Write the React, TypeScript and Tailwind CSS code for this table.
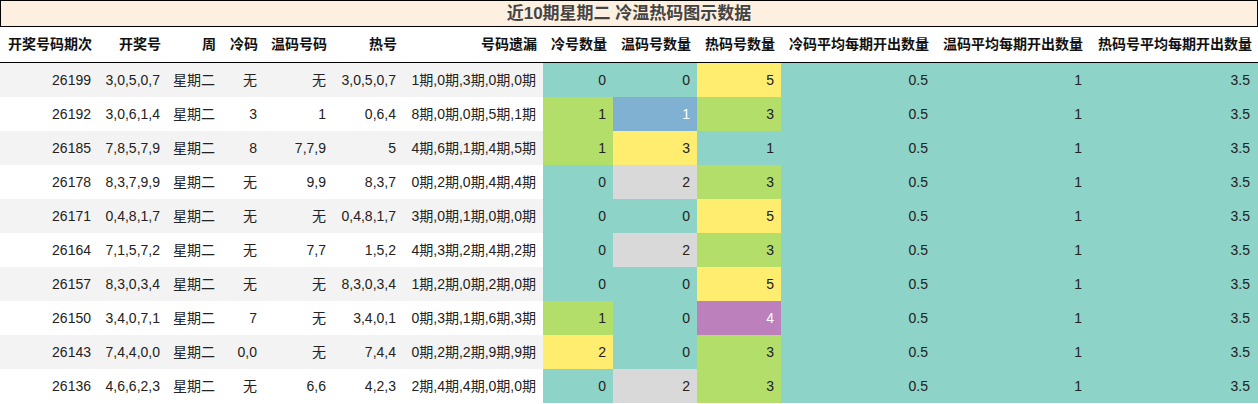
import React from "react";

const widths = [98, 69, 55, 42, 69, 70, 140, 70, 84, 84, 154, 154, 169];
const headers = [
  "开奖号码期次",
  "开奖号",
  "周",
  "冷码",
  "温码号码",
  "热号",
  "号码遗漏",
  "冷号数量",
  "温码号数量",
  "热码号数量",
  "冷码平均每期开出数量",
  "温码平均每期开出数量",
  "热码号平均每期开出数量",
];

type C = "t" | "g" | "y" | "b" | "s" | "p";
const rows: { d: string[]; n: [string, C][] }[] = [
  { d: ["26199", "3,0,5,0,7", "星期二", "无", "无", "3,0,5,0,7", "1期,0期,3期,0期,0期"], n: [["0", "t"], ["0", "t"], ["5", "y"]] },
  { d: ["26192", "3,0,6,1,4", "星期二", "3", "1", "0,6,4", "8期,0期,0期,5期,1期"], n: [["1", "g"], ["1", "b"], ["3", "g"]] },
  { d: ["26185", "7,8,5,7,9", "星期二", "8", "7,7,9", "5", "4期,6期,1期,4期,5期"], n: [["1", "g"], ["3", "y"], ["1", "t"]] },
  { d: ["26178", "8,3,7,9,9", "星期二", "无", "9,9", "8,3,7", "0期,2期,0期,4期,4期"], n: [["0", "t"], ["2", "s"], ["3", "g"]] },
  { d: ["26171", "0,4,8,1,7", "星期二", "无", "无", "0,4,8,1,7", "3期,0期,1期,0期,0期"], n: [["0", "t"], ["0", "t"], ["5", "y"]] },
  { d: ["26164", "7,1,5,7,2", "星期二", "无", "7,7", "1,5,2", "4期,3期,2期,4期,2期"], n: [["0", "t"], ["2", "s"], ["3", "g"]] },
  { d: ["26157", "8,3,0,3,4", "星期二", "无", "无", "8,3,0,3,4", "1期,2期,0期,2期,0期"], n: [["0", "t"], ["0", "t"], ["5", "y"]] },
  { d: ["26150", "3,4,0,7,1", "星期二", "7", "无", "3,4,0,1", "0期,3期,1期,6期,3期"], n: [["1", "g"], ["0", "t"], ["4", "p"]] },
  { d: ["26143", "7,4,4,0,0", "星期二", "0,0", "无", "7,4,4", "0期,2期,2期,9期,9期"], n: [["2", "y"], ["0", "t"], ["3", "g"]] },
  { d: ["26136", "4,6,6,2,3", "星期二", "无", "6,6", "4,2,3", "2期,4期,4期,0期,0期"], n: [["0", "t"], ["2", "s"], ["3", "g"]] },
];

const colorCls: Record<C, string> = {
  t: "bg-[#8dd3c7] text-[#222]",
  g: "bg-[#b3de69] text-[#222]",
  y: "bg-[#ffed6f] text-[#222]",
  b: "bg-[#80b1d3] text-white",
  s: "bg-[#d9d9d9] text-[#222]",
  p: "bg-[#bc80bd] text-white",
};

export default function App() {
  return (
    <div
      className="w-[1258px] h-[404px] overflow-hidden bg-white text-[14px] text-[#222]"
      style={{ fontFamily: "'Liberation Sans', 'Noto Sans CJK SC', sans-serif" }}
    >
      <div className="h-[27px] border border-black bg-[#fef0e1] flex items-center justify-center text-[17px] font-bold text-[#444] leading-none">
        近10期星期二 冷温热码图示数据
      </div>
      <table className="table-fixed border-separate border-spacing-0 w-[1258px]">
        <colgroup>
          {widths.map((w, i) => (
            <col key={i} style={{ width: w }} />
          ))}
        </colgroup>
        <thead>
          <tr>
            {headers.map((h, i) => (
              <th
                key={i}
                className="h-[36px] p-0 pr-[6px] text-right font-bold whitespace-nowrap border-b border-black text-[#111] align-middle"
              >
                {h}
              </th>
            ))}
          </tr>
        </thead>
        <tbody>
          {rows.map((r, ri) => {
            const stripe = ri % 2 === 0 ? "bg-[#f3f3f3]" : "bg-white";
            return (
              <tr key={ri}>
                {r.d.map((v, i) => (
                  <td
                    key={i}
                    className={`h-[34px] p-0 pr-[7px] text-right whitespace-nowrap align-middle text-[#222] ${stripe}`}
                  >
                    {v}
                  </td>
                ))}
                {r.n.map(([v, c], i) => (
                  <td
                    key={"n" + i}
                    className={`h-[34px] p-0 pr-[7px] text-right align-middle ${colorCls[c]}`}
                  >
                    {v}
                  </td>
                ))}
                <td className="h-[34px] p-0 pr-[7px] text-right align-middle bg-[#8dd3c7] text-[#222]">0.5</td>
                <td className="h-[34px] p-0 pr-[7px] text-right align-middle bg-[#8dd3c7] text-[#222]">1</td>
                <td className="h-[34px] p-0 pr-[8px] text-right align-middle bg-[#8dd3c7] text-[#222]">3.5</td>
              </tr>
            );
          })}
        </tbody>
      </table>
    </div>
  );
}
